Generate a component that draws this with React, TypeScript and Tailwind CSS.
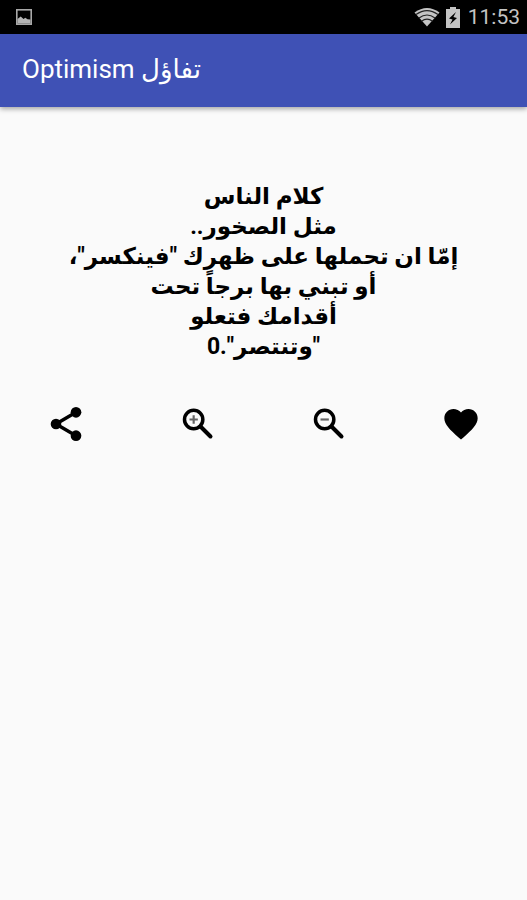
import { MdFavorite } from 'react-icons/md';

const quote = [
  'كلام الناس',
  'مثل الصخور..',
  'إمّا ان تحملها على ظهرك "فينكسر"،',
  'أو تبني بها برجاً تحت',
  'أقدامك فتعلو',
  '"وتنتصر".0',
];

function ShareIcon({ className }: { className?: string }) {
  return (
    <svg viewBox="0 0 24 24" fill="currentColor" className={className}>
      <circle cx="18" cy="5" r="3.2" />
      <circle cx="6" cy="12" r="3.2" />
      <circle cx="18" cy="19" r="3.2" />
      <path d="M18 5L6 12l12 7" fill="none" stroke="currentColor" strokeWidth="2.1" />
    </svg>
  );
}

function ZoomIcon({ sign, className }: { sign: string; className?: string }) {
  return (
    <svg viewBox="0 0 24 24" fill="none" stroke="currentColor" className={className}>
      <circle cx="9.4" cy="9.3" r="5.5" strokeWidth="2.1" />
      <path d="M13.5 13.5l6 6" strokeWidth="2.4" strokeLinecap="round" />
      <path d={sign} strokeWidth="1.3" strokeOpacity="0.6" />
    </svg>
  );
}

const ZoomIn = ({ className }: { className?: string }) => (
  <ZoomIcon sign="M6.9 9.3h5M9.4 6.8v5" className={className} />
);

const ZoomOut = ({ className }: { className?: string }) => (
  <ZoomIcon sign="M6.9 9.3h5" className={className} />
);

const actions = [
  { label: 'Share', Icon: ShareIcon },
  { label: 'Zoom in', Icon: ZoomIn },
  { label: 'Zoom out', Icon: ZoomOut },
  { label: 'Favorite', Icon: MdFavorite },
];

export default function App() {
  return (
    <div className="min-h-screen bg-[#fafafa] text-black font-['Roboto','DejaVu_Sans',sans-serif]">
      {/* Status bar */}
      <div className="flex h-[34px] items-center justify-between bg-black pl-4 pr-[7px] text-[#c4c4c4]">
        <svg className="h-4 w-4" viewBox="0 0 16 16" fill="none">
          <rect x="0.8" y="0.8" width="14.4" height="14.4" stroke="#a8a8a8" strokeWidth="1.6" />
          <path d="M1.5 14.5V10l3.2-2.5L7.5 10l1.8-1.2 2.2 1.4 3 0.3v4z" fill="#b4b4b4" />
        </svg>
        <div className="flex items-center">
          <svg className="h-5 w-[26px]" viewBox="0 0 26 20">
            <path d="M0.5 5.5Q13-3.5 25.5 5.5L13 19.5z" fill="currentColor" />
            <path
              d="M2 7.6Q13-0.5 24 7.6M5 11Q13 5 21 11M7.5 14.2Q13 10.2 18.5 14.2"
              fill="none"
              stroke="#222"
              strokeWidth="1.2"
            />
          </svg>
          <svg className="ml-1.5 h-[21px] w-[14px]" viewBox="0 0 14 21">
            <path d="M4 0h6v2h4v19H0V2h4z" fill="currentColor" />
            <path d="M10 5L3 11.5l3.5 1L4 17.5l7-6.5-3.6-1z" fill="#000" />
          </svg>
          <span className="ml-2 text-[21px] leading-[34px]">11:53</span>
        </div>
      </div>

      {/* App bar */}
      <header className="flex h-[73px] items-center bg-[#3f51b5] px-[22px] pb-1 shadow-[0_2px_5px_rgba(0,0,0,0.35)]">
        <h1 className="text-[26px] leading-8 text-white">Optimism تفاؤل</h1>
      </header>

      <main className="pt-[75px]">
        <p dir="rtl" className="text-center text-[23px] font-bold leading-[30px]">
          {quote.map((line) => (
            <span key={line} className="block">
              {line}
            </span>
          ))}
        </p>

        <div className="mt-[42px] grid grid-cols-4 justify-items-center">
          {actions.map(({ label, Icon }) => (
            <button key={label} type="button" aria-label={label}>
              <Icon className="h-10 w-10" />
            </button>
          ))}
        </div>
      </main>
    </div>
  );
}
